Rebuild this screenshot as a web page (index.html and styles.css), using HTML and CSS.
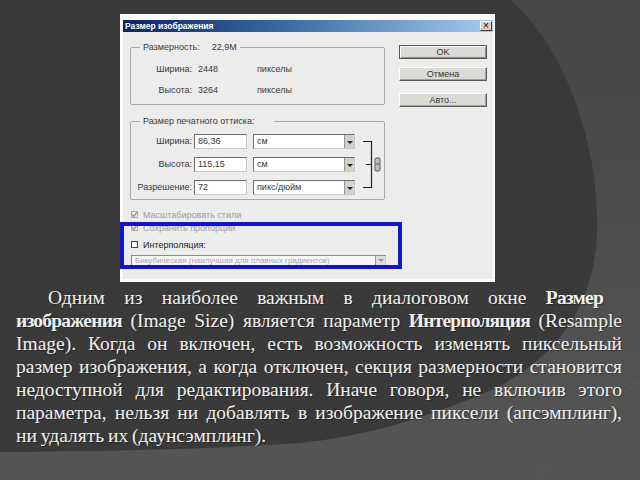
FILE: index.html
```html
<!DOCTYPE html>
<html lang="ru">
<head>
<meta charset="utf-8">
<title>Размер изображения</title>
<link rel="stylesheet" href="styles.css">
</head>
<body>
<svg class="bg" width="640" height="480" viewBox="0 0 640 480" aria-hidden="true">
  <defs>
    <linearGradient id="g" x1="0" y1="0" x2="0" y2="1">
      <stop offset="0" stop-color="#464646"/>
      <stop offset="1" stop-color="#555555"/>
    </linearGradient>
  </defs>
  <rect width="640" height="480" fill="url(#g)"/>
  <path d="M0,0 L510,0 C560,40 600,140 597,233 C594,320 540,370 480,395 C420,420 360,437 300,443 C200,450 100,451 0,452 Z" fill="#3a3a3a"/>
  <path d="M640,380 C600,410 560,445 535,480" stroke="#5c5c5c" fill="none"/>
</svg>
<main class="slide">
  <div class="dialog">
    <div class="window">
      <div class="titlebar">
        <span class="title">Размер изображения</span>
        <span class="close">×</span>
      </div>
      <div class="dlg-body">
        <div class="left">
          <fieldset class="group g1">
            <legend>Размерность:<span class="legend-val">22,9M</span></legend>
            <div class="drow"><span class="lbl">Ширина:</span><span class="val">2448</span><span class="unit">пикселы</span></div>
            <div class="drow"><span class="lbl">Высота:</span><span class="val">3264</span><span class="unit">пикселы</span></div>
          </fieldset>
          <fieldset class="group g2">
            <legend>Размер печатного оттиска:</legend>
            <div class="print">
              <div class="rows">
                <div class="prow"><span class="lbl">Ширина:</span><span class="input">86,36</span><span class="select">см<i class="arrow"></i></span></div>
                <div class="prow"><span class="lbl">Высота:</span><span class="input">115,15</span><span class="select">см<i class="arrow"></i></span></div>
                <div class="prow"><span class="lbl">Разрешение:</span><span class="input">72</span><span class="select">пикс/дюйм<i class="arrow"></i></span></div>
              </div>
              <svg class="link" width="20" height="61" viewBox="0 0 20 61" aria-hidden="true">
                <path d="M0,7.5 H8.5 V53.5 H0 M3,30.5 H8.5" stroke="#222" stroke-width="1.2" fill="none"/>
                <rect x="12" y="24" width="5" height="7" rx="2" stroke="#7a7a7a" stroke-width="1.3" fill="#bdbdbd"/>
                <rect x="12" y="30" width="5" height="7" rx="2" stroke="#7a7a7a" stroke-width="1.3" fill="#bdbdbd"/>
              </svg>
            </div>
          </fieldset>
          <div class="checks">
            <div class="check disabled"><span class="cb"><svg width="7" height="7" viewBox="0 0 7 7"><path d="M1,3.5 L3,5.5 L6,1" stroke="#9a9a9a" stroke-width="1.4" fill="none"/></svg></span>Масштабировать стили</div>
            <div class="check disabled"><span class="cb"><svg width="7" height="7" viewBox="0 0 7 7"><path d="M1,3.5 L3,5.5 L6,1" stroke="#9a9a9a" stroke-width="1.4" fill="none"/></svg></span>Сохранить пропорции</div>
            <div class="check interp"><span class="cb"></span>Интерполяция:</div>
          </div>
          <div class="select wide">Бикубическая (наилучшая для плавных градиентов)<i class="arrow"></i></div>
        </div>
        <div class="buttons">
          <div class="btn default">OK</div>
          <div class="btn cancel">Отмена</div>
          <div class="btn auto">Авто...</div>
        </div>
      </div>
    </div>
    <div class="highlight"></div>
  </div>
  <p class="text">
    <span class="line first">Одним из наиболее важным в диалоговом окне <b>Размер</b></span>
    <span class="line"><b>изображения</b> (Image Size) является параметр <b>Интерполяция</b> (Resample</span>
    <span class="line">Image). Когда он включен, есть возможность изменять пиксельный</span>
    <span class="line">размер изображения, а когда отключен, секция размерности становится</span>
    <span class="line">недоступной для редактирования. Иначе говоря, не включив этого</span>
    <span class="line">параметра, нельзя ни добавлять в изображение пиксели (апсэмплинг),</span>
    <span class="line last">ни удалять их (даунсэмплинг).</span>
  </p>
</main>
</body>
</html>
```
FILE: styles.css
```css
* { box-sizing: border-box; }
html, body { margin: 0; padding: 0; }
body {
  width: 640px;
  height: 480px;
  overflow: hidden;
  position: relative;
  background: #3a3a3a;
}
.bg { position: absolute; left: 0; top: 0; z-index: 0; }
.slide { position: relative; z-index: 1; padding-top: 14px; }

.dialog {
  position: relative;
  width: 375px;
  height: 268px;
  margin-left: 120px;
  background: #fbfbfb;
  padding: 6px 2px 3px 3px;
  font-family: "Liberation Sans", Arial, sans-serif;
  font-size: 9px;
  color: #3a3a3a;
}
.window {
  height: 100%;
  background: #ececec;
  display: flex;
  flex-direction: column;
}
.titlebar {
  height: 12px;
  flex: none;
  background: linear-gradient(to right, #0a246a 0%, #3a6ea5 45%, #a6caf0 100%);
  display: flex;
  align-items: center;
  justify-content: space-between;
  padding: 0 1px 0 2px;
}
.title { color: #fff; font-weight: bold; font-size: 8.5px; line-height: 12px; }
.close {
  width: 12px;
  height: 10px;
  background: #d4d0c8;
  border: 1px solid;
  border-color: #fff #404040 #404040 #fff;
  font-size: 10px;
  line-height: 7px;
  text-align: center;
  color: #000;
}
.dlg-body { flex: 1; display: flex; padding: 0 6px 0 7px; }
.left { width: 256px; padding-top: 10px; }

.group {
  margin: 0;
  padding: 0;
  border: 1px solid #a9a9a9;
  border-radius: 2px;
  min-width: 0;
  width: 255px;
}
.group legend { padding: 0 3px; margin-left: 9px; line-height: 11px; height: 11px; }
.legend-val { margin-left: 12px; }
.g1 { padding: 6px 0 3px 0; }
.drow {
  display: grid;
  grid-template-columns: 61px 65px auto;
  height: 21px;
  line-height: 21px;
}
.lbl { text-align: right; }
.val { padding-left: 6px; }

.g2 { margin-top: 11px; padding: 7px 0 4px 0; }
.g2 legend { padding-right: 20px; }
.print { display: flex; align-items: flex-start; }
.rows { display: flex; flex-direction: column; gap: 8px; }
.prow {
  display: grid;
  grid-template-columns: 61px 55px 108px;
  column-gap: 0;
  height: 15px;
  line-height: 15px;
}
.prow .input { margin-left: 2px; }
.prow .select { margin-left: 6px; }
.input, .select {
  position: relative;
  height: 15px;
  background: #fff;
  border: 1px solid;
  border-color: #6f6f6f #c8c8c8 #c8c8c8 #6f6f6f;
  padding-left: 3px;
  line-height: 13px;
  white-space: nowrap;
  overflow: hidden;
}
.arrow {
  position: absolute;
  right: 0;
  top: 0;
  bottom: 0;
  width: 10px;
  background: #d4d0c8;
  border-left: 1px solid #999;
}
.arrow::after {
  content: "";
  position: absolute;
  left: 2px;
  top: 50%;
  margin-top: -1px;
  border-left: 3px solid transparent;
  border-right: 3px solid transparent;
  border-top: 3px solid #222;
}
.link { margin-left: 8px; flex: none; }

.checks { margin-top: 8px; margin-left: 1px; }
.check { display: flex; align-items: center; height: 13px; }
.check.disabled { color: #a0a0a0; }
.check.interp { margin-top: 4px; color: #222; }
.cb {
  width: 7px;
  height: 7px;
  margin-right: 5px;
  border: 1px solid #444;
  background: #fff;
  display: flex;
  align-items: center;
  justify-content: center;
  overflow: hidden;
}
.check.disabled .cb { border-color: #aaa; background: #f2f2f2; }
.cb svg { display: block; flex: none; }

.select.wide {
  margin-top: 4px;
  margin-left: 1px;
  width: 255px;
  height: 11px;
  line-height: 9px;
  font-size: 8px;
  color: #a8a8a8;
  background: #f6f6f6;
  border-color: #8a8a8a #d0d0d0 #d0d0d0 #8a8a8a;
}
.select.wide .arrow { width: 10px; background: #dcdcdc; }
.select.wide .arrow::after { border-top-color: #999; top: 3px; margin-top: 0; }

.buttons { margin-left: 13px; width: 88px; padding-top: 13px; display: flex; flex-direction: column; }
.btn {
  height: 14px;
  border: 1px solid;
  border-color: #fff #5a5a5a #5a5a5a #fff;
  background: #dadad6;
  box-shadow: inset -1px -1px 0 #a0a0a0;
  text-align: center;
  line-height: 12px;
  color: #333;
}
.btn.default { border-color: #555; box-shadow: inset 1px 1px 0 #fff, inset -1px -1px 0 #8a8a8a; }
.btn.cancel { margin-top: 8px; }
.btn.auto { margin-top: 12px; }

.highlight {
  position: absolute;
  left: 0;
  top: 208px;
  width: 282px;
  height: 47px;
  border: 4px solid #1414cc;
}

.text {
  margin: 4px 0 0 16px;
  width: 606px;
  font-family: "Liberation Serif", "Times New Roman", serif;
  font-size: 19.5px;
  line-height: 23px;
  color: #f0f0f0;
  text-shadow: 1px 1px 1px rgba(0, 0, 0, 0.35);
}
.line {
  display: block;
  white-space: nowrap;
  word-spacing: -1px;
  text-align: justify;
  text-align-last: justify;
}
.line.first { padding-left: 32px; padding-right: 19px; }
.line.last { text-align-last: left; }
.text b { font-weight: bold; letter-spacing: -0.8px; }
```
